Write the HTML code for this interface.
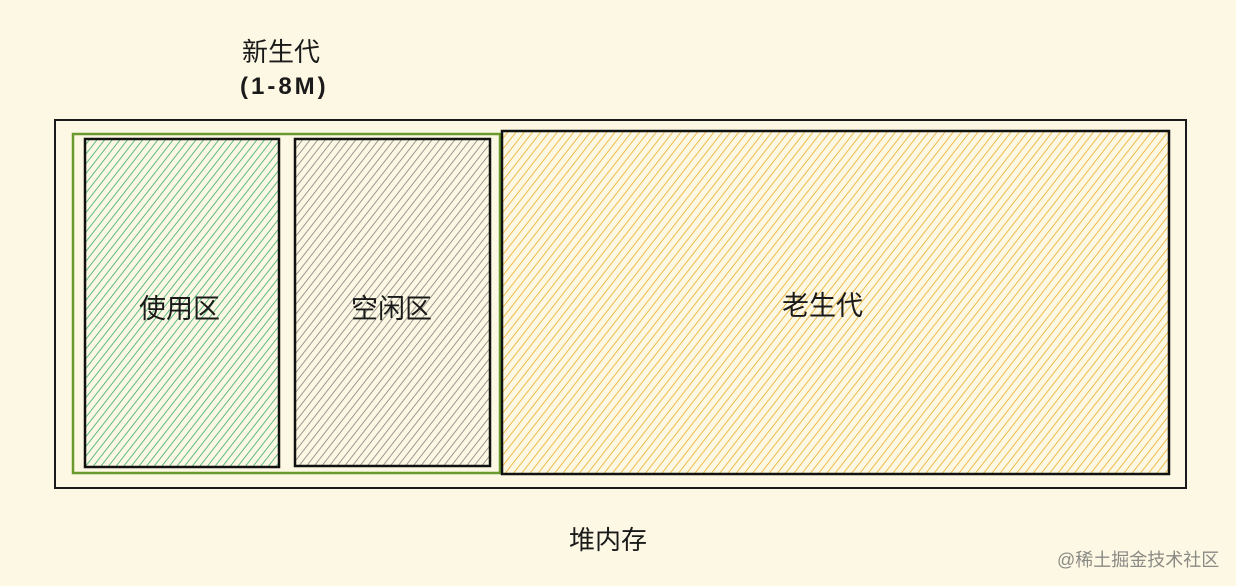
<!DOCTYPE html>
<html><head><meta charset="utf-8"><style>
html,body{margin:0;padding:0;background:#fdf8e3;}
body{width:1236px;height:586px;overflow:hidden;position:relative;font-family:"Liberation Sans","Noto Sans CJK SC",sans-serif;}
.t{position:absolute;color:#1a1a1a;white-space:nowrap;}
</style></head><body>
<svg width="1236" height="586" style="position:absolute;left:0;top:0">
<defs>
<pattern id="pg" width="6" height="6" patternUnits="userSpaceOnUse" patternTransform="rotate(38)"><line x1="0" y1="0" x2="0" y2="6" stroke="#5fba85" stroke-width="2"/></pattern>
<pattern id="pa" width="6" height="6" patternUnits="userSpaceOnUse" patternTransform="rotate(38)"><line x1="0" y1="0" x2="0" y2="6" stroke="#8f8f88" stroke-width="1.8"/></pattern>
<pattern id="po" width="6.5" height="6.5" patternUnits="userSpaceOnUse" patternTransform="rotate(38)"><line x1="0" y1="0" x2="0" y2="6.5" stroke="#ecb53c" stroke-width="1.8"/></pattern>
</defs>
<rect x="55" y="120" width="1131" height="368" fill="none" stroke="#1a1a1a" stroke-width="2"/>
<rect x="73" y="134" width="427" height="339" fill="none" stroke="#6a9a2e" stroke-width="2.5"/>
<rect x="85" y="139" width="194" height="328" fill="url(#pg)" stroke="#111" stroke-width="2.5"/>
<rect x="295" y="139" width="195" height="327" fill="url(#pa)" stroke="#111" stroke-width="2.5"/>
<rect x="502" y="131" width="667" height="343" fill="url(#po)" stroke="#111" stroke-width="2.5"/>
</svg>
<div class="t" style="left:242px;top:32px;font-size:26px">新生代</div>
<div class="t" style="left:240px;top:73px;font-size:24px;font-weight:bold;letter-spacing:3px">(1-8M)</div>
<div class="t" style="left:139px;top:287px;font-size:27px">使用区</div>
<div class="t" style="left:351px;top:287px;font-size:27px">空闲区</div>
<div class="t" style="left:782px;top:284px;font-size:27px">老生代</div>
<div class="t" style="left:569px;top:520px;font-size:26px">堆内存</div>
<div class="t" style="left:1057px;top:546px;font-size:18px;color:#8a8a85">@稀土掘金技术社区</div>
</body></html>
